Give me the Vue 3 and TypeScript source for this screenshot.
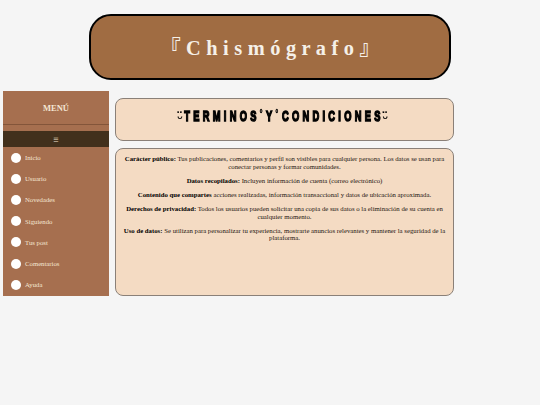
<script setup lang="ts">
const items: string[] = ['Inicio', 'Usuario', 'Novedades', 'Siguiendo', 'Tus post', 'Comentarios', 'Ayuda']
const terms: { b: string; t: string }[] = [
  { b: 'Carácter público:', t: ' Tus publicaciones, comentarios y perfil son visibles para cualquier persona. Los datos se usan para conectar personas y formar comunidades.' },
  { b: 'Datos recopilados:', t: ' Incluyen información de cuenta (correo electrónico)' },
  { b: 'Contenido que compartes', t: ' acciones realizadas, información transaccional y datos de ubicación aproximada.' },
  { b: 'Derechos de privacidad:', t: ' Todos los usuarios pueden solicitar una copia de sus datos o la eliminación de su cuenta en cualquier momento.' },
  { b: 'Uso de datos:', t: ' Se utilizan para personalizar tu experiencia, mostrarte anuncios relevantes y mantener la seguridad de la plataforma.' },
]
</script>

<template>
  <div class="page">
    <header class="brand">
      <h1>『 C h i s m ó g r a f o 』</h1>
    </header>
    <div class="body">
      <aside class="side">
        <div class="menu-title">MENÚ</div>
        <div class="burger">☰</div>
        <ul>
          <li v-for="i in items" :key="i"><span class="dot"></span>{{ i }}</li>
        </ul>
      </aside>
      <main class="main">
        <section class="title-box">
          <h2><span class="smile">ᵕ̈</span>TERMINOS<span class="ring">˚</span>Y<span class="ring">˚</span>CONDICIONES<span class="smile">ᵕ̈</span></h2>
        </section>
        <section class="content">
          <p v-for="x in terms" :key="x.b"><strong>{{ x.b }}</strong>{{ x.t }}</p>
        </section>
      </main>
    </div>
  </div>
</template>

<style>
html, body { margin: 0; background: #f5f5f5; }
</style>

<style scoped>
.page {
  width: 540px;
  height: 405px;
  padding-top: 14px;
  box-sizing: border-box;
  font-family: "Liberation Serif", serif;
  overflow: hidden;
  filter: blur(0.3px);
}
.brand {
  width: 362px;
  height: 66px;
  margin-left: 89px;
  padding-bottom: 2px;
  box-sizing: border-box;
  background: #a06c42;
  border: 2px solid #000;
  border-radius: 22px;
  display: flex;
  align-items: center;
  justify-content: center;
}
.brand h1 {
  margin: 0;
  color: #f5f0e8;
  font-size: 20.4px;
  font-weight: 700;
  white-space: pre;
  font-family: "Liberation Serif", "Noto Sans CJK JP", serif;
  word-spacing: 0.4px;
}
.body {
  display: flex;
  margin-top: 11px;
  padding-left: 3px;
}
.side {
  width: 106px;
  height: 205px;
  background: #a66f4f;
  color: #f5e6d3;
  font-size: 6.75px;
}
.menu-title {
  height: 33px;
  display: flex;
  align-items: center;
  justify-content: center;
  font-size: 8.5px;
  font-weight: 700;
  border-bottom: 1px solid #83553a;
  margin-bottom: 6px;
}
.burger {
  height: 16px;
  background: #42301c;
  display: flex;
  align-items: center;
  justify-content: center;
  font-family: "DejaVu Sans", sans-serif;
  font-size: 6px;
}
ul {
  list-style: none;
  margin: 0;
  padding: 0 0 0 8px;
}
li {
  height: 21.2px;
  display: flex;
  align-items: center;
  gap: 4px;
}
.dot {
  width: 10px;
  height: 10px;
  border-radius: 50%;
  background: #fff;
}
.main {
  margin-left: 6px;
  width: 339px;
  padding-top: 7px;
  display: flex;
  flex-direction: column;
  gap: 7px;
}
.title-box, .content {
  box-sizing: border-box;
  background: #f4dbc3;
  border: 1px solid #8a8078;
  border-radius: 8px;
}
.title-box {
  height: 43px;
  padding-bottom: 5px;
  display: flex;
  align-items: center;
  justify-content: center;
}
.title-box h2 {
  margin: 0;
  font-family: "Liberation Sans", sans-serif;
  font-size: 15px;
  font-weight: 700;
  letter-spacing: 5.3px;
  color: #000;
  -webkit-text-stroke: 1.5px #000;
  white-space: nowrap;
  transform: scaleX(0.62);
}
.smile {
  display: inline-block;
  -webkit-text-stroke: 0.2px #000;
  font-weight: 400;
  font-size: 15px;
  letter-spacing: 3px;
  vertical-align: -3px;
  transform: scaleX(1.5);
  font-family: "DejaVu Sans", sans-serif;
}
.ring { -webkit-text-stroke: 0.4px #000; }
.content {
  height: 148px;
  padding: 6px 6px 0;
  text-align: center;
  font-size: 6.75px;
  line-height: 7.5px;
  color: #1c1510;
}
.content p { margin: 0 0 6.7px; }
.content strong { color: #000; }
</style>
